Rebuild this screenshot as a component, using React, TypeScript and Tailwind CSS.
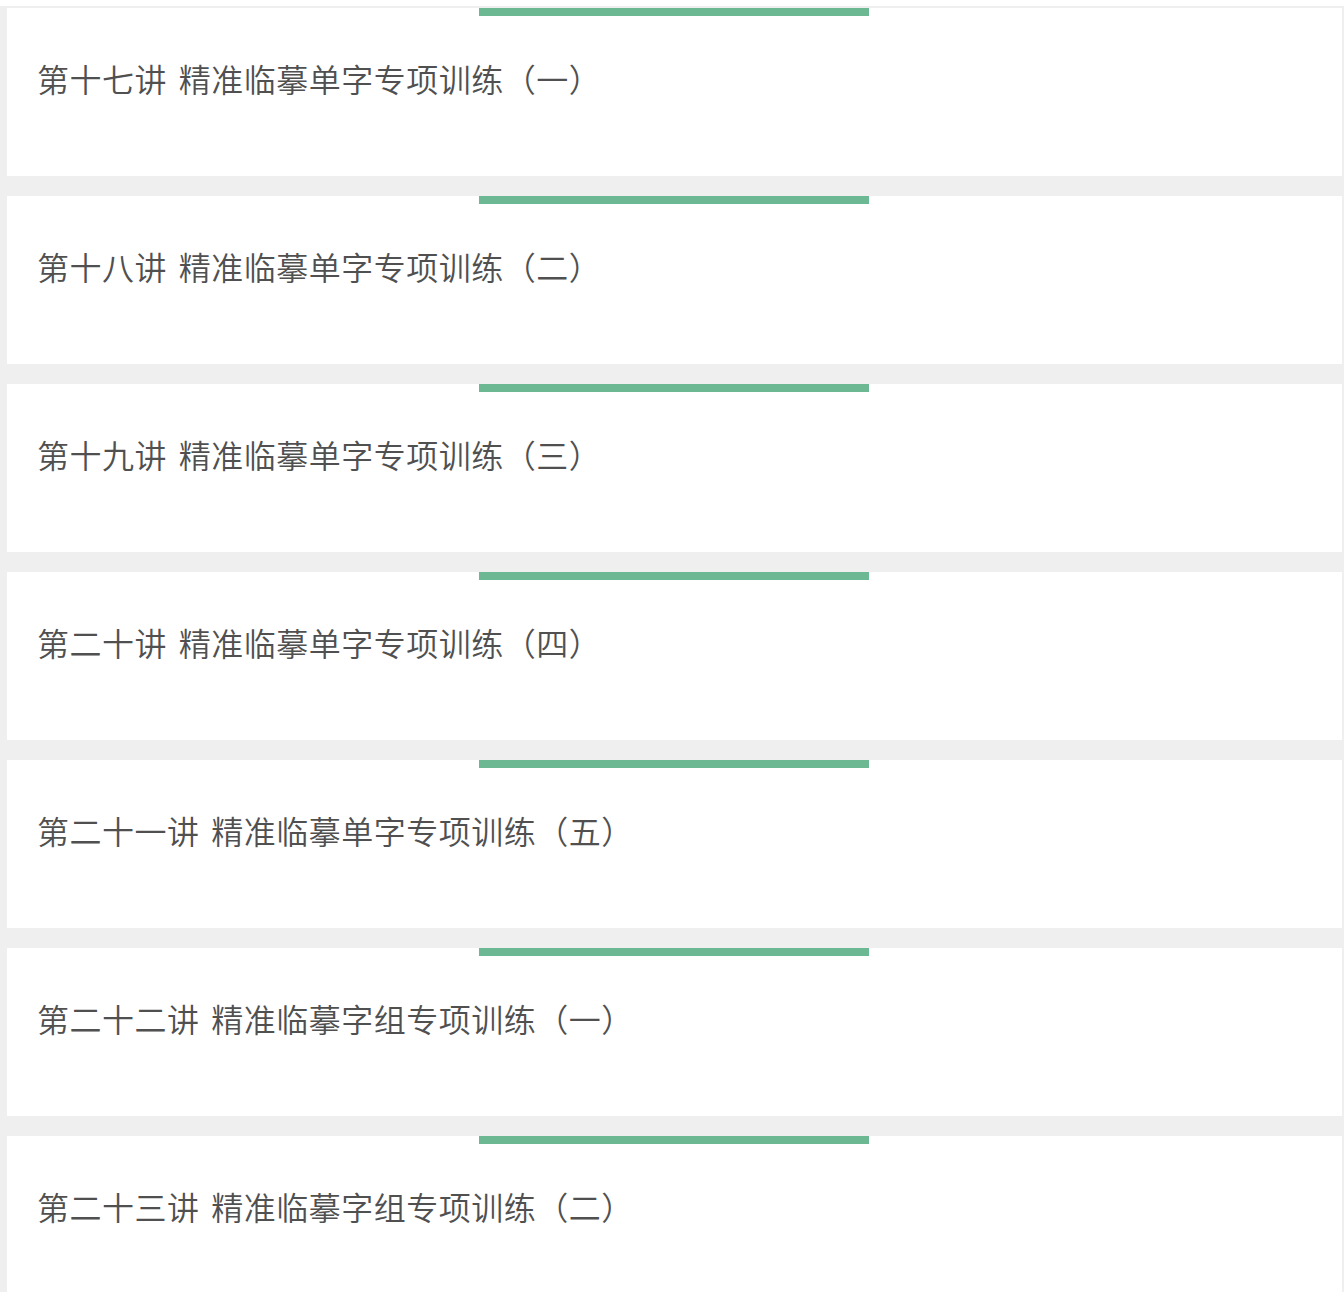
const lessons = [
  "第十七讲 精准临摹单字专项训练（一）",
  "第十八讲 精准临摹单字专项训练（二）",
  "第十九讲 精准临摹单字专项训练（三）",
  "第二十讲 精准临摹单字专项训练（四）",
  "第二十一讲 精准临摹单字专项训练（五）",
  "第二十二讲 精准临摹字组专项训练（一）",
  "第二十三讲 精准临摹字组专项训练（二）",
];

function LessonCard({ title }: { title: string }) {
  return (
    <div className="relative h-[168px] shrink-0 bg-white">
      <div className="absolute left-[472px] top-0 h-[8px] w-[390px] bg-[#6bb893]" />
      <div className="pl-[30px] pt-[50px] text-[32px] font-[350] leading-[40px] tracking-[0.5px] text-[#505050] [word-spacing:4px]">
        {title}
      </div>
    </div>
  );
}

export default function App() {
  return (
    <div
      className="h-[1292px] overflow-hidden bg-white pt-[6px]"
      style={{ fontFamily: '"Noto Sans CJK SC", "Noto Sans", sans-serif' }}
    >
      <div className="flex h-full flex-col gap-[20px] bg-[#efefef] pl-[7px] pr-[2px] pt-[2px]">
        {lessons.map((t) => (
          <LessonCard key={t} title={t} />
        ))}
      </div>
    </div>
  );
}
